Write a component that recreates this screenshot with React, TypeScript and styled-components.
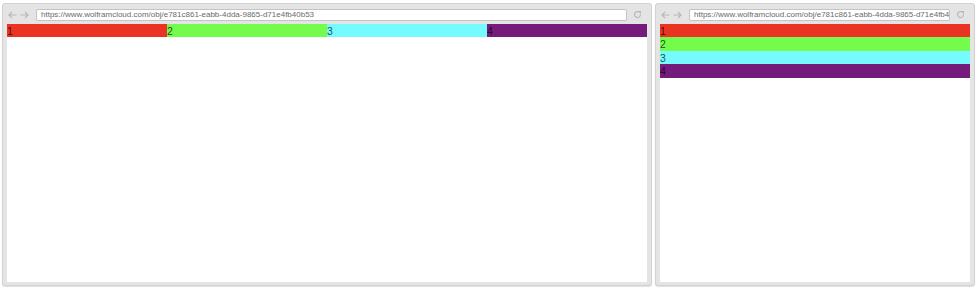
import React from "react";
import styled, { createGlobalStyle } from "styled-components";

const Global = createGlobalStyle`
  html, body { margin: 0; padding: 0; background: #ffffff; }
  body { font-family: "Liberation Sans", Arial, sans-serif; }
`;

const Page = styled.div`
  display: flex;
  gap: 3px;
  padding: 3px 2px 0 2px;
  width: 978px;
  height: 290px;
  box-sizing: border-box;
`;

const Window = styled.div<{ $w: number }>`
  width: ${(p) => p.$w}px;
  height: 283px;
  box-sizing: border-box;
  background: #e4e4e4;
  border: 1px solid #d2d2d2;
  border-radius: 3px;
  box-shadow: 0 1px 1px rgba(0, 0, 0, 0.12);
  display: flex;
  flex-direction: column;
  padding: 0 4px 3px 4px;
`;

const Toolbar = styled.div`
  height: 20px;
  display: flex;
  align-items: center;
  padding-top: 1px;
  box-sizing: border-box;
`;

const Nav = styled.div`
  width: 28px;
  display: flex;
  align-items: center;
  gap: 3px;
  padding-left: 1px;
  color: #b8b8b8;
`;

const UrlBar = styled.div`
  flex: 1;
  min-width: 0;
  height: 12px;
  box-sizing: border-box;
  background: #fff;
  border: 1px solid #c4c4c4;
  border-radius: 2px;
  display: flex;
  align-items: center;
  padding-left: 4px;
  overflow: hidden;
  white-space: nowrap;
  font-size: 8px;
  color: #6a6a6a;
`;

const Reload = styled.div`
  width: 20px;
  display: flex;
  justify-content: center;
  align-items: center;
  color: #b8b8b8;
`;

const Content = styled.div`
  flex: 1;
  background: #fff;
  display: flex;
  flex-direction: column;
`;

const Row = styled.div<{ $dir: "row" | "column" }>`
  display: flex;
  flex-direction: ${(p) => p.$dir};
`;

const Cell = styled.div<{ $bg: string; $h: number; $grow: boolean }>`
  flex: ${(p) => (p.$grow ? "1 1 0" : "none")};
  height: ${(p) => p.$h}px;
  background: ${(p) => p.$bg};
  font-size: 10.5px;
  line-height: ${(p) => p.$h}px;
  color: rgba(0, 0, 0, 0.72);
  padding-top: 1px;
  box-sizing: border-box;
  overflow: hidden;
`;

const colors = ["#ea3323", "#75fb4c", "#75fbfd", "#741b7c"];

const Arrow = ({ dir }: { dir: "l" | "r" }) => (
  <svg width="9" height="8" viewBox="0 0 9 8" fill="none" stroke="currentColor" strokeWidth="1.2">
    {dir === "l" ? (
      <path d="M8.5 4H1M4 1L1 4l3 3" />
    ) : (
      <path d="M0.5 4H8M5 1l3 3-3 3" />
    )}
  </svg>
);

const ReloadIcon = () => (
  <svg width="9" height="9" viewBox="0 0 9 9" fill="none" stroke="currentColor" strokeWidth="1.2">
    <path d="M7.5 4.5A3 3 0 1 1 6.4 2.2" />
    <path d="M5.2 1.6h2.2v2.2" />
  </svg>
);

const Browser = ({ w, dir, h }: { w: number; dir: "row" | "column"; h: number }) => (
  <Window $w={w}>
    <Toolbar>
      <Nav>
        <Arrow dir="l" />
        <Arrow dir="r" />
      </Nav>
      <UrlBar>https://www.wolframcloud.com/obj/e781c861-eabb-4dda-9865-d71e4fb40b53</UrlBar>
      <Reload>
        <ReloadIcon />
      </Reload>
    </Toolbar>
    <Content>
      <Row $dir={dir}>
        {colors.map((c, i) => (
          <Cell key={i} $bg={c} $h={h} $grow={dir === "row"}>
            {i + 1}
          </Cell>
        ))}
      </Row>
    </Content>
  </Window>
);

export default function App() {
  return (
    <>
      <Global />
      <Page>
        <Browser w={650} dir="row" h={13.3} />
        <Browser w={320} dir="column" h={13.4} />
      </Page>
    </>
  );
}
